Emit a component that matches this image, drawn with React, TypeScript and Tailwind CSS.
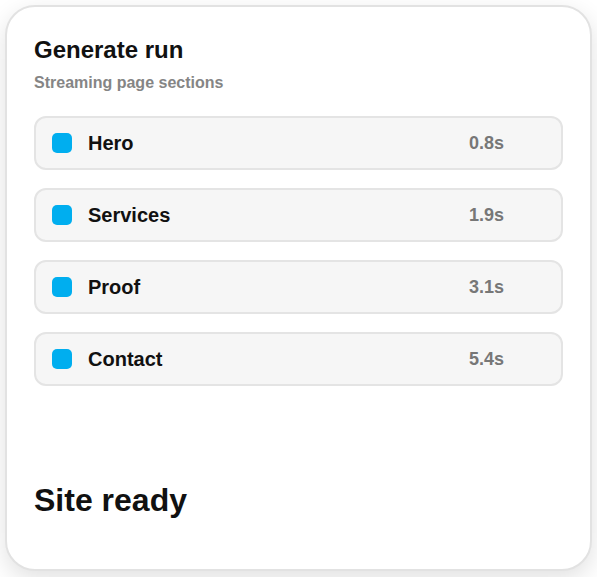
const sections = [
  { name: "Hero", time: "0.8s" },
  { name: "Services", time: "1.9s" },
  { name: "Proof", time: "3.1s" },
  { name: "Contact", time: "5.4s" },
];

export default function App() {
  return (
    <div className="w-[597px] h-[577px] bg-white p-[5px] font-['Liberation_Sans',Arial,sans-serif]">
      <div className="flex flex-col h-[566px] w-[587px] rounded-[30px] border-2 border-[#e2e2e2] bg-white px-[27px] pt-[27px] pb-[49px] shadow-[0_8px_24px_rgba(0,0,0,0.12)]">
        <h1 className="text-[24px] leading-8 font-bold text-[#111]">Generate run</h1>
        <p className="mt-[5px] text-[16px] leading-6 font-bold text-[#858585]">Streaming page sections</p>

        <div className="mt-[21px] flex flex-col gap-[18px]">
          {sections.map((s) => (
            <div
              key={s.name}
              className="flex items-center h-[54px] rounded-[12px] border-2 border-[#e4e4e4] bg-[#f6f6f6] pl-4 pr-[57px]"
            >
              <span className="w-5 h-5 rounded-[5px] bg-[#00aeef] shrink-0" />
              <span className="ml-4 flex-1 text-[20px] font-bold text-[#111]">{s.name}</span>
              <span className="text-[18px] font-bold text-[#777]">{s.time}</span>
            </div>
          ))}
        </div>

        <h2 className="mt-auto text-[32px] leading-10 font-bold text-[#111]">Site ready</h2>
      </div>
    </div>
  );
}
